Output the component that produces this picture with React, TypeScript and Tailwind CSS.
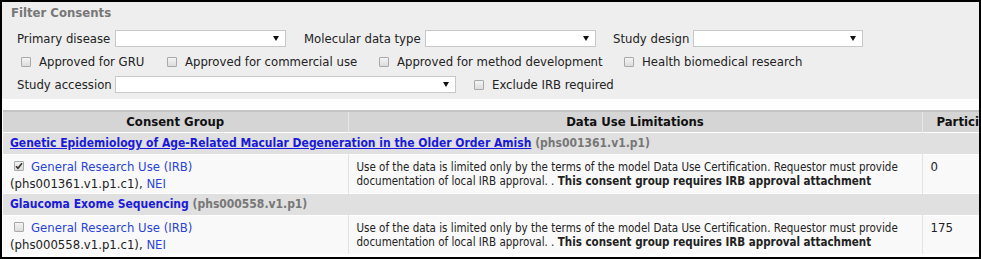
import React from 'react';

const font = "font-['DejaVu_Sans_Condensed','DejaVu_Sans',sans-serif]";

function Select({ width }: { width: string }) {
  return (
    <span className={`${width} h-[17px] bg-white border border-[#c8c8c8] flex items-center justify-end pr-[6px]`}>
      <svg width="6" height="5" viewBox="0 0 6 5">
        <path d="M0 0 H6 L3 5 Z" fill="#111" />
      </svg>
    </span>
  );
}

function Box({ checked = false }: { checked?: boolean }) {
  return (
    <span className="w-[10px] h-[10px] shrink-0 border border-[#a9a9a9] rounded-[1px] bg-gradient-to-b from-[#f4f4f4] to-[#dcdcdc] flex items-center justify-center">
      {checked && (
        <svg width="8" height="8" viewBox="0 0 8 8">
          <path d="M1 4.2 L3 6.3 L7 1.3" stroke="#333" strokeWidth="1.6" fill="none" />
        </svg>
      )}
    </span>
  );
}

function Check({ label, width }: { label: string; width: string }) {
  return (
    <span className={`${width} flex items-center gap-[8px]`}>
      <Box />
      <span>{label}</span>
    </span>
  );
}

const dul =
  'Use of the data is limited only by the terms of the model Data Use Certification. Requestor must provide documentation of local IRB approval. . ';

interface Group {
  title: string;
  id: string;
  underline: boolean;
  consent: string;
  checked: boolean;
  count: string;
}

const groups: Group[] = [
  {
    title: 'Genetic Epidemiology of Age-Related Macular Degeneration in the Older Order Amish',
    id: '(phs001361.v1.p1)',
    underline: true,
    consent: '(phs001361.v1.p1.c1)',
    checked: true,
    count: '0',
  },
  {
    title: 'Glaucoma Exome Sequencing',
    id: '(phs000558.v1.p1)',
    underline: false,
    consent: '(phs000558.v1.p1.c1)',
    checked: false,
    count: '175',
  },
];

export default function App() {
  return (
    <div className={`w-[981px] h-[259px] overflow-hidden border-2 border-black bg-white text-[13px] text-[#222] ${font}`}>
      <div className="mt-[10px] bg-[#eeeeee] pb-[3px]">
        <div className="-mt-[10px] w-[115px] h-[20px] bg-[#eeeeee] pl-[9px] pt-[3px] font-bold text-[#777] leading-[16px]">
          Filter Consents
        </div>
        <div className="mt-[5px] pl-[15px] flex flex-col">
          <div className="h-[23px] flex items-center">
            <span className="w-[98px]">Primary disease</span>
            <Select width="w-[171px]" />
            <span className="ml-[18px] w-[121px]">Molecular data type</span>
            <Select width="w-[171px]" />
            <span className="ml-[17px] w-[80px]">Study design</span>
            <Select width="w-[170px]" />
          </div>
          <div className="h-[23px] flex items-center pl-[4px]">
            <Check label="Approved for GRU" width="w-[146px]" />
            <Check label="Approved for commercial use" width="w-[212px]" />
            <Check label="Approved for method development" width="w-[245px]" />
            <Check label="Health biomedical research" width="w-[200px]" />
          </div>
          <div className="h-[23px] flex items-center">
            <span className="w-[98px]">Study accession</span>
            <Select width="w-[341px]" />
            <span className="ml-[18px] flex items-center gap-[8px]">
              <Box />
              <span>Exclude IRB required</span>
            </span>
          </div>
        </div>
      </div>

      <table className="mt-[11px] ml-[1px] w-[1130px] table-fixed border-collapse">
        <colgroup>
          <col className="w-[345px]" />
          <col className="w-[574px]" />
          <col className="w-[211px]" />
        </colgroup>
        <thead>
          <tr className="h-[21px] bg-[#d5d5d5] border-t-2 border-[#c4c4c4] font-bold text-[#111] leading-[16px]">
            <th className="border-r border-[#e8e8e8] text-center">Consent Group</th>
            <th className="border-r border-[#e8e8e8] text-center">Data Use Limitations</th>
            <th className="text-left pl-[14px]">Participants</th>
          </tr>
        </thead>
        <tbody>
          {groups.map((g) => (
            <React.Fragment key={g.id}>
              <tr className="h-[22px] bg-[#e0e0e0] border-t border-white">
                <td colSpan={3} className="pl-[7px] font-bold whitespace-nowrap text-[12px] leading-[16px]">
                  <a className={`text-[#1a1ad8] ${g.underline ? 'underline' : ''}`}>{g.title}</a>{' '}
                  <span className="text-[#777]">{g.id}</span>
                </td>
              </tr>
              <tr className="bg-[#f9f9f9] border-t border-white align-top">
                <td className="border-r border-[#e3e3e3] pl-[7px] pt-[3px] pb-[1px] leading-[17px]">
                  <div className="flex items-center gap-[7px] pl-[4px]">
                    <Box checked={g.checked} />
                    <a className="text-[#2a44d8]">General Research Use (IRB)</a>
                  </div>
                  <div>
                    {g.consent}, <a className="text-[#2a44d8]">NEI</a>
                  </div>
                </td>
                <td className="border-r border-[#e3e3e3] pl-[8px] pr-[2px] pt-[5px] text-[11.5px] leading-[14px]">
                  {dul}
                  <b>This consent group requires IRB approval attachment</b>
                </td>
                <td className="pl-[8px] pt-[3px] leading-[17px]">{g.count}</td>
              </tr>
            </React.Fragment>
          ))}
        </tbody>
      </table>
    </div>
  );
}
